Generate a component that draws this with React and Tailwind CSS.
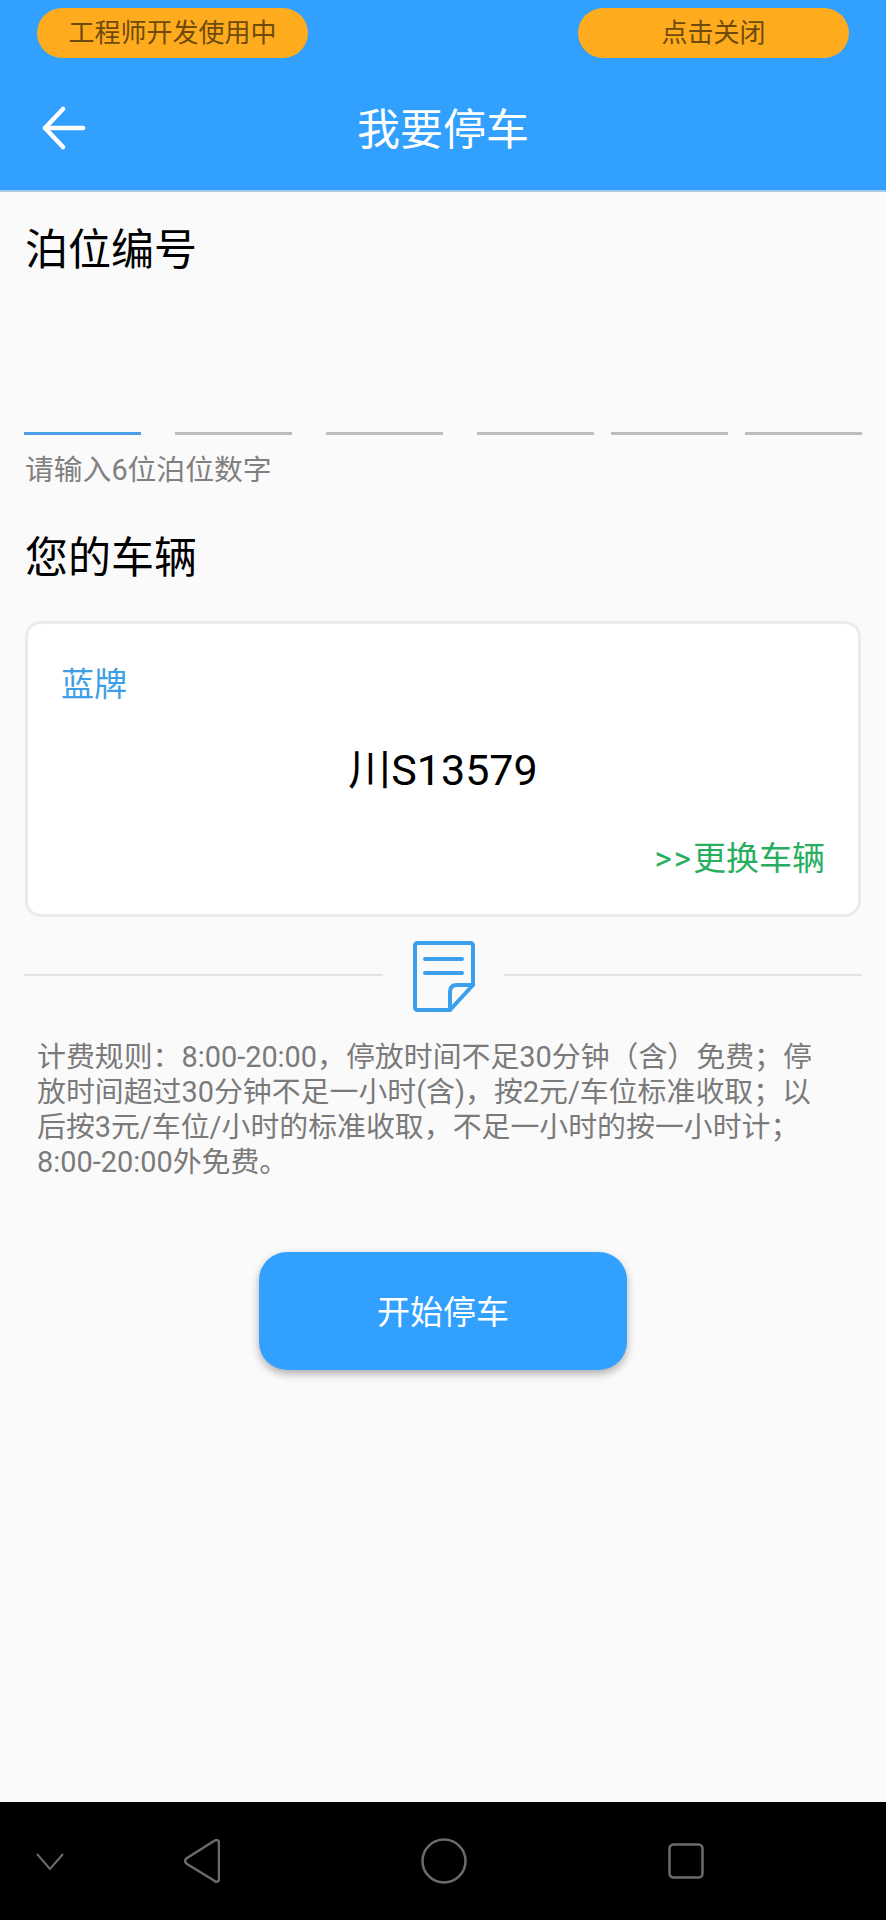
const FONT = "font-['Roboto','Noto_Sans_CJK_SC',sans-serif]";

function BackArrow() {
  return (
    <svg width="44" height="44" viewBox="0 0 44 44" fill="none" stroke="white" strokeWidth="4.5" strokeLinecap="round" strokeLinejoin="round">
      <path d="M3 22H41" />
      <path d="M21 3L3 22L21 41" />
    </svg>
  );
}

function NoteIcon() {
  return (
    <svg width="62" height="71" viewBox="0 0 62 71" fill="none" stroke="#3a9fec" strokeWidth="4" strokeLinecap="round" strokeLinejoin="round">
      <path d="M5 2H57C59 2 60 3 60 5V44L37 69H5C3 69 2 68 2 66V5C2 3 3 2 5 2Z" />
      <path d="M12 18H49" />
      <path d="M12 32H49" />
      <path d="M60 44H44C39 44 37 47 37 51V69" />
    </svg>
  );
}

function NavBar() {
  return (
    <div className="h-[118px] bg-black flex items-center text-[#6b6b6b] shrink-0">
      <svg className="ml-[36px] mt-[1px]" width="28" height="18" viewBox="0 0 28 18" fill="none" stroke="currentColor" strokeWidth="2">
        <path d="M1 1L14 16L27 1" />
      </svg>
      <svg className="ml-[120px]" width="36" height="44" viewBox="0 0 36 44" fill="none" stroke="currentColor" strokeWidth="2.5" strokeLinejoin="round">
        <path d="M30 2C33 0 35 1.5 35 4V40C35 43 32 43.5 30 41.5L3 25C0.5 23 0.5 21 3 19Z" />
      </svg>
      <svg className="ml-[201px]" width="46" height="46" viewBox="0 0 46 46" fill="none" stroke="currentColor" strokeWidth="2.5">
        <circle cx="23" cy="23" r="21.5" />
      </svg>
      <svg className="ml-[201px]" width="36" height="36" viewBox="0 0 36 36" fill="none" stroke="currentColor" strokeWidth="2.5">
        <rect x="1.5" y="1.5" width="33" height="33" rx="4" />
      </svg>
    </div>
  );
}

function Pill({ children }) {
  return (
    <div className="w-[271px] h-[50px] rounded-full bg-[#ffab1e] text-[#6e4a0c] text-[26px] leading-[50px] text-center">
      {children}
    </div>
  );
}

export default function App() {
  const slots = ["w-[117px] bg-[#4a9fe6]", "w-[117px] bg-[#bdbdbd] ml-[34px]", "w-[117px] bg-[#bdbdbd] ml-[34px]", "w-[117px] bg-[#bdbdbd] ml-[34px]", "w-[117px] bg-[#bdbdbd] ml-[17px]", "w-[117px] bg-[#bdbdbd] ml-[17px]"];

  return (
    <div className={`${FONT} w-[886px] h-[1920px] flex flex-col bg-[#fafafa] overflow-hidden`}>
      {/* Header */}
      <header className="h-[192px] shrink-0 bg-[#31a0ff] border-b-2 border-[#a9c9e6] pt-2">
        <div className="flex justify-between px-[37px]">
          <Pill>工程师开发使用中</Pill>
          <Pill>点击关闭</Pill>
        </div>
        <div className="relative mt-[43px] h-[58px] flex items-center justify-center">
          <div className="absolute left-[42px] top-[5px]">
            <BackArrow />
          </div>
          <h1 className="text-[43px] leading-[58px] font-normal text-white">我要停车</h1>
        </div>
      </header>

      <main className="flex-1 px-[24px]">
        <h2 className="mt-[29px] text-[43px] leading-[58px] font-normal text-black ml-[1px]">泊位编号</h2>

        <div className="mt-[153px] flex">
          {slots.map((cls, i) => (
            <div key={i} className={`h-[3px] ${cls}`} />
          ))}
        </div>
        <p className="mt-[15px] ml-[1px] text-[28.8px] leading-[40px] text-[#808080]">请输入6位泊位数字</p>

        <h2 className="mt-[39px] ml-[1px] text-[43px] leading-[58px] font-normal text-black">您的车辆</h2>

        {/* Vehicle card */}
        <div className="mt-[34px] ml-[1px] w-[836px] h-[296px] bg-white border-[3px] border-[#ebebeb] rounded-[16px] px-[33px] pt-[39px]">
          <div className="text-[33px] leading-[44px] text-[#3f9fe6]">蓝牌</div>
          <div className="mt-[34px] text-center text-[43px] leading-[58px] text-black">川S13579</div>
          <div className="mt-[38px] text-right text-[33px] leading-[44px] text-[#27ae60]">
            <span className="tracking-[2px]">&gt;&gt;</span>更换车辆
          </div>
        </div>

        {/* Divider */}
        <div className="mt-[24px] flex items-center">
          <div className="h-[2px] w-[359px] mb-[4px] bg-[#e3e3e3]" />
          <div className="ml-[30px]">
            <NoteIcon />
          </div>
          <div className="ml-[29px] h-[2px] mb-[4px] flex-1 bg-[#e3e3e3]" />
        </div>

        <p className="mt-[28px] ml-[13px] w-[780px] text-[28.9px] leading-[35px] text-[#7a7a7a]">
          计费规则：8:00-20:00，停放时间不足30分钟（含）免费；停放时间超过30分钟不足一小时(含)，按2元/车位标准收取；以后按3元/车位/小时的标准收取，不足一小时的按一小时计；8:00-20:00外免费。
        </p>

        <div className="mt-[72px] flex justify-center">
          <button className="w-[368px] h-[118px] pt-[3px] rounded-[28px] bg-[#31a0ff] text-white text-[33px] shadow-[0_4px_8px_rgba(0,0,0,0.3)]">
            开始停车
          </button>
        </div>
      </main>

      <NavBar />
    </div>
  );
}
